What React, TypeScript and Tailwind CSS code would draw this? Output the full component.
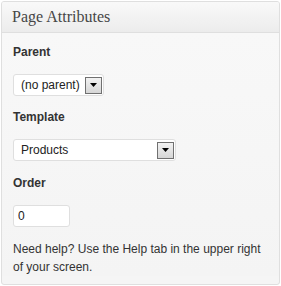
import React from 'react'

function SelectBox({ value, width }: { value: string; width: string }) {
  return (
    <div
      className={`flex h-[22px] items-center justify-between rounded-[3px] border border-[#dfdfdf] bg-white pl-[7px] pr-[1px] ${width}`}
    >
      <span className="text-[12px] leading-none text-[#222]">{value}</span>
      <span className="flex h-[17px] w-[17px] items-center justify-center border border-[#707070] bg-gradient-to-b from-[#f2f2f2] to-[#d6d6d6]">
        <svg width="7" height="4" viewBox="0 0 7 4">
          <path d="M0 0h7L3.5 4z" fill="#000" />
        </svg>
      </span>
    </div>
  )
}

export default function App() {
  return (
    <div className="h-[286px] w-[281px] bg-white pl-[1px] pt-[1px] font-['Liberation_Sans',Arial,sans-serif] text-[#333]">
      <div className="flex h-[284px] w-[279px] flex-col overflow-hidden rounded-[3px] border border-[#dfdfdf] bg-[#f5f5f5]">
        <div className="flex h-[31px] shrink-0 items-center border-b border-[#dfdfdf] bg-gradient-to-b from-[#f9f9f9] to-[#ececec] pl-[10px]">
          <h3 className="font-['Liberation_Serif',Georgia,serif] text-[16px] leading-none text-[#464646]">
            Page Attributes
          </h3>
        </div>
        <div className="flex flex-col items-start bg-gradient-to-b from-[#f8f8f8] to-[#f4f4f4] pl-[11px] pr-[10px]">
          <p className="mt-[12px] text-[12px] font-bold leading-[15px]">Parent</p>
          <div className="mt-[14px]">
            <SelectBox value="(no parent)" width="w-[91px]" />
          </div>
          <p className="mt-[14px] text-[12px] font-bold leading-[15px]">Template</p>
          <div className="mt-[14px]">
            <SelectBox value="Products" width="w-[163px]" />
          </div>
          <p className="mt-[15px] text-[12px] font-bold leading-[15px]">Order</p>
          <input
            readOnly
            value="0"
            className="mt-[14px] h-[22px] w-[57px] rounded-[3px] border border-[#dfdfdf] bg-white px-[4px] text-[12px] text-[#222] outline-none"
          />
          <p className="mt-[13px] text-[12px] leading-[18px]">
            Need help? Use the Help tab in the upper right of your screen.
          </p>
        </div>
      </div>
    </div>
  )
}
